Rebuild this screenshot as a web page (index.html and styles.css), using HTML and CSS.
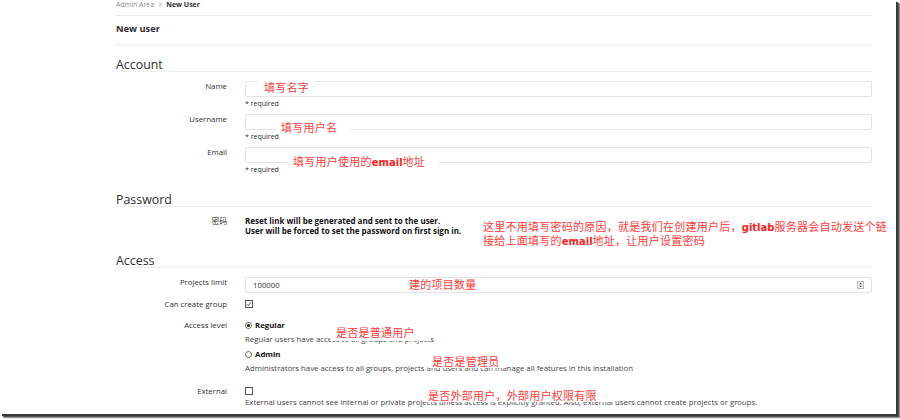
FILE: index.html
```html
<!DOCTYPE html>
<html>
<head>
<meta charset="utf-8">
<link rel="stylesheet" href="styles.css">
</head>
<body>
<div class="frame">
  <div class="content">
    <div class="crumbs"><span class="crumb-link">Admin Area</span><span class="crumb-sep">&gt;</span><span class="crumb-cur">New User</span></div>
    <div class="page-title">New user</div>

    <div class="section-head">Account</div>
    <div class="row row-first">
      <div class="label">Name</div>
      <div class="field"><div class="input"></div><div class="help">* required</div></div>
    </div>
    <div class="row row-next">
      <div class="label">Username</div>
      <div class="field"><div class="input"></div><div class="help">* required</div></div>
    </div>
    <div class="row row-next">
      <div class="label">Email</div>
      <div class="field"><div class="input"></div><div class="help">* required</div></div>
    </div>

    <div class="section-head sec-password">Password</div>
    <div class="row row-pw">
      <div class="label">密码</div>
      <div class="field pw-text"><div>Reset link will be generated and sent to the user.</div><div>User will be forced to set the password on first sign in.</div></div>
    </div>

    <div class="section-head sec-access">Access</div>
    <div class="row row-first">
      <div class="label">Projects limit</div>
      <div class="field"><div class="input input-num"><span class="num">100000</span><span class="spin"><svg width="7" height="8" viewBox="0 0 7 8"><rect x="0.5" y="0.5" width="6" height="7" fill="#f1f1f1" stroke="#bbb"/><path d="M2 3.2 L3.5 1.7 L5 3.2Z M2 4.8 L3.5 6.3 L5 4.8Z" fill="#444"/></svg></span></div></div>
    </div>
    <div class="row row-check">
      <div class="label">Can create group</div>
      <div class="field"><svg class="box" width="8" height="8" viewBox="0 0 8 8"><rect x="0.5" y="0.5" width="7" height="7" fill="#fff" stroke="#555"/><path d="M1.8 4.2 L3.3 5.7 L6.3 2.2" fill="none" stroke="#333" stroke-width="0.9"/></svg></div>
    </div>
    <div class="row row-level">
      <div class="label">Access level</div>
      <div class="field">
        <div class="radio-line"><svg width="7" height="7" viewBox="0 0 7 7"><circle cx="3.5" cy="3.5" r="3" fill="#fff" stroke="#444" stroke-width="0.8"/><circle cx="3.5" cy="3.5" r="1.6" fill="#222"/></svg><b>Regular</b></div>
        <div class="desc">Regular users have access to all groups and projects</div>
        <div class="radio-line radio-admin"><svg width="7" height="7" viewBox="0 0 7 7"><circle cx="3.5" cy="3.5" r="3" fill="#fff" stroke="#444" stroke-width="0.8"/></svg><b>Admin</b></div>
        <div class="desc">Administrators have access to all groups, projects and users and can manage all features in this installation</div>
      </div>
    </div>
    <div class="row row-ext">
      <div class="label">External</div>
      <div class="field">
        <svg class="box" width="8" height="8" viewBox="0 0 8 8"><rect x="0.5" y="0.5" width="7" height="7" fill="#fff" stroke="#555"/></svg>
        <div class="desc">External users cannot see internal or private projects unless access is explicitly granted. Also, external users cannot create projects or groups.</div>
      </div>
    </div>
  </div>

  <div class="note n-name">填写名字</div>
  <div class="note n-user">填写用户名</div>
  <div class="note n-email">填写用户使用的<b>email</b>地址</div>
  <div class="note n-pw">这里不用填写密码的原因，就是我们在创建用户后，<b>gitlab</b>服务器会自动发送个链<br>接给上面填写的<b>email</b>地址，让用户设置密码</div>
  <div class="note n-proj">建的项目数量</div>
  <div class="note n-reg">是否是普通用户</div>
  <div class="note n-admin">是否是管理员</div>
  <div class="note n-ext">是否外部用户，外部用户权限有限</div>
</div>
</body>
</html>
```

FILE: styles.css
```css
html, body {
  margin: 0;
  padding: 0;
  background: #ffffff;
}
body {
  width: 900px;
  height: 420px;
  overflow: hidden;
  font-family: "Open Sans", "Noto Sans", "Noto Sans CJK SC", sans-serif;
  color: #2e2e2e;
}
.frame {
  position: relative;
  width: 896px;
  height: 414px;
  background: #fff;
  box-shadow: 2px 2px 0 #3a3a3a, 3px 3px 1px #555, 4px 4px 1px #999;
}
.content {
  margin-left: 116px;
  width: 756px;
}
.crumbs {
  height: 15px;
  border-bottom: 1px solid #ececec;
  font-size: 7px;
  line-height: 9px;
  color: #8a8a8a;
}
.crumb-sep {
  margin: 0 4px;
  color: #999;
}
.crumb-cur {
  color: #2e2e2e;
  font-weight: 700;
}
.page-title {
  height: 21px;
  padding-top: 7px;
  border-bottom: 1px solid #ececec;
  font-size: 9.3px;
  line-height: 11px;
  font-weight: 700;
  color: #2e2e2e;
}
.section-head {
  padding-top: 13px;
  height: 13px;
  line-height: 14px;
  border-bottom: 1px solid #ececec;
  font-size: 12.4px;
  color: #2e2e2e;
}
.sec-password {
  padding-top: 19px;
}
.sec-access {
  padding-top: 18px;
}
.row {
  display: grid;
  grid-template-columns: 111px 1fr;
  column-gap: 18px;
  font-size: 7.8px;
  line-height: 10px;
}
.row-first { margin-top: 9px; }
.row-next { margin-top: 6px; }
.row-pw { margin-top: 9px; }
.row-check { margin-top: 6px; }
.row-level { margin-top: 11px; }
.row-ext { margin-top: 13px; }
.label {
  text-align: right;
  color: #2e2e2e;
  line-height: 10px;
}
.input {
  box-sizing: border-box;
  height: 16px;
  border: 1px solid #e3e3e3;
  border-radius: 2px;
  background: #fff;
}
.input-num {
  display: flex;
  align-items: center;
  justify-content: space-between;
  padding: 0 7px 0 7px;
}
.num {
  font-size: 7.8px;
  line-height: 10px;
  color: #333;
}
.spin {
  display: flex;
}
.help {
  margin-top: 2px;
  font-size: 7px;
  line-height: 9px;
  color: #2e2e2e;
}
.pw-text {
  font-weight: 700;
  font-size: 8px;
  color: #111;
}
.box {
  display: block;
  margin-top: 1px;
}
.radio-line {
  display: flex;
  align-items: center;
  gap: 3px;
  height: 10px;
}
.radio-line b {
  font-weight: 700;
  color: #111;
}
.radio-admin {
  margin-top: 5px;
}
.desc {
  margin-top: 4px;
  color: #444;
  line-height: 10px;
}
.row-ext .desc {
  margin-top: 2px;
}
.note {
  position: absolute;
  background: #fff;
  color: #ff3b3b;
  font-family: "Noto Sans CJK SC", sans-serif;
  font-size: 11px;
  line-height: 13px;
  letter-spacing: 0.25px;
  white-space: nowrap;
}
.note b {
  font-family: "DejaVu Sans", sans-serif;
  font-weight: 700;
  font-size: 10px;
  letter-spacing: 0;
  color: #ff2020;
}
.n-name { left: 258px; top: 81px; padding: 0 6px; }
.n-user { left: 276px; top: 121px; padding: 0 14px 0 5px; }
.n-email { left: 288px; top: 155px; padding: 0 14px 0 5px; }
.n-pw { left: 483px; top: 220px; line-height: 12px; background: transparent; }
.n-proj { left: 403px; top: 278px; padding: 0 6px; }
.n-reg { left: 330px; top: 326px; padding: 0 16px 2px 6px; }
.n-admin { left: 428px; top: 355px; padding: 0 6px 0 4px; }
.n-ext { left: 422px; top: 389px; padding: 0 16px 0 6px; }
```
